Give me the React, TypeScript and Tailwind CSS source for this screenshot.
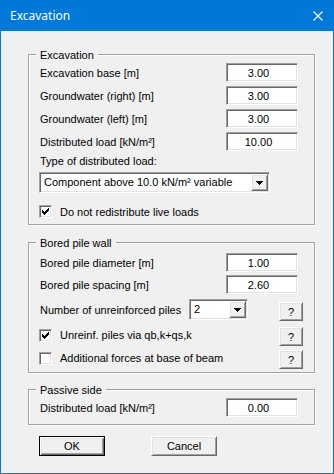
import type { ReactNode } from 'react';

const SUNKEN =
  'border border-t-[#a0a0a0] border-l-[#a0a0a0] border-r-white border-b-white shadow-[inset_1px_1px_0_#696969,inset_-1px_-1px_0_#e3e3e3]';
const RAISED =
  'border border-t-white border-l-white border-r-[#696969] border-b-[#696969] shadow-[inset_1px_1px_0_#e3e3e3,inset_-1px_-1px_0_#a0a0a0]';

function Group({ title, className = '', children }: { title: string; className?: string; children: ReactNode }) {
  return (
    <div
      className={`relative w-[287px] ml-[27px] border border-[#a0a0a0] shadow-[inset_1px_1px_0_#fff,1px_1px_0_#fff] pl-[11px] pr-[11px] ${className}`}
    >
      <span className="absolute left-[7px] top-[-7px] bg-[#f0f0f0] px-[4px] leading-[14px]">{title}</span>
      {children}
    </div>
  );
}

function NumField({ label, value, className = '' }: { label: string; value: string; className?: string }) {
  return (
    <div className={`flex items-center h-[19px] ${className}`}>
      <span className="flex-1 leading-[14px]">{label}</span>
      <div className={`${SUNKEN} bg-white w-[72px] h-[19px] mr-[5px] flex items-center justify-center pr-[7px] leading-[14px]`}>
        {value}
      </div>
    </div>
  );
}

function Arrow() {
  return (
    <svg width="7" height="4" viewBox="0 0 7 4" shapeRendering="crispEdges">
      <path d="M0 0h7v1h-1v1h-1v1h-1v1h-1v-1h-1v-1h-1v-1h-1z" fill="#000" />
    </svg>
  );
}

function Combo({ value, className = '' }: { value: string; className?: string }) {
  return (
    <div className={`${SUNKEN} bg-white h-[21px] flex items-stretch p-[1px] ${className}`}>
      <span className="flex-1 pl-[3px] leading-[17px] whitespace-nowrap overflow-hidden">{value}</span>
      <div className={`${RAISED} bg-[#f0f0f0] w-[17px] flex items-center justify-center`}>
        <Arrow />
      </div>
    </div>
  );
}

function CheckBox({ checked, label }: { checked: boolean; label: string }) {
  return (
    <div className="flex items-center ml-[-1px]">
      <div className={`${SUNKEN} bg-white w-[13px] h-[13px] flex items-center justify-center`}>
        {checked && (
          <svg width="7" height="7" viewBox="0 0 7 7" shapeRendering="crispEdges">
            <path
              d="M0 2h1v3h-1zM1 3h1v3h-1zM2 4h1v3h-1zM3 3h1v3h-1zM4 2h1v3h-1zM5 1h1v3h-1zM6 0h1v3h-1z"
              fill="#000"
            />
          </svg>
        )}
      </div>
      <span className="ml-[8px] leading-[14px] whitespace-nowrap">{label}</span>
    </div>
  );
}

function HelpButton({ className = '' }: { className?: string }) {
  return (
    <div className={`${RAISED} bg-[#f0f0f0] w-[24px] h-[19px] flex items-center justify-center leading-[14px] ${className}`}>
      ?
    </div>
  );
}

export default function App() {
  return (
    <div className="w-[334px] h-[474px] flex flex-col bg-[#f0f0f0] text-[11px] text-black font-['Liberation_Sans',Arial,sans-serif]">
      {/* Title bar */}
      <div className="h-[31px] shrink-0 bg-[#0078d7] flex items-center justify-between pl-[10px] pr-[11px] text-white">
        <span className="text-[12px] font-['Noto_Sans',sans-serif] leading-[16px]">Excavation</span>
        <svg width="10" height="10" viewBox="0 0 10 10">
          <path d="M0.5 0.5L9.5 9.5M9.5 0.5L0.5 9.5" stroke="#fff" strokeWidth="1.1" />
        </svg>
      </div>

      <div className="flex-1 border-x border-b border-[#0078d7] pt-[23px]">
        {/* Excavation */}
        <Group title="Excavation" className="pt-[8px] pb-[6px]">
          <NumField label="Excavation base [m]" value="3.00" />
          <NumField label="Groundwater (right) [m]" value="3.00" className="mt-[4px]" />
          <NumField label="Groundwater (left) [m]" value="3.00" className="mt-[4px]" />
          <NumField label="Distributed load [kN/m²]" value="10.00" className="mt-[4px]" />
          <div className="mt-[3px] h-[14px] leading-[14px]">Type of distributed load:</div>
          <Combo value="Component above 10.0 kN/m² variable" className="mt-[4px] w-[231px] ml-[-1px]" />
          <div className="mt-[12px] h-[13px] flex items-center">
            <CheckBox checked label="Do not redistribute live loads" />
          </div>
        </Group>

        {/* Bored pile wall */}
        <Group title="Bored pile wall" className="mt-[17px] pt-[10px] pb-[3px]">
          <NumField label="Bored pile diameter [m]" value="1.00" />
          <NumField label="Bored pile spacing [m]" value="2.60" className="mt-[3px]" />
          <div className="mt-[5px] flex items-start h-[22px]">
            <span className="w-[149px] h-[21px] flex items-center leading-[14px] whitespace-nowrap">Number of unreinforced piles</span>
            <Combo value="2" className="w-[59px]" />
            <HelpButton className="ml-auto mt-[3px]" />
          </div>
          <div className="mt-[6px] flex items-start h-[19px]">
            <div className="h-[16px] flex items-center">
              <CheckBox checked label="Unreinf. piles via qb,k+qs,k" />
            </div>
            <HelpButton className="ml-auto" />
          </div>
          <div className="mt-[4px] flex items-start h-[19px]">
            <div className="h-[16px] flex items-center">
              <CheckBox checked={false} label="Additional forces at base of beam" />
            </div>
            <HelpButton className="ml-auto" />
          </div>
        </Group>

        {/* Passive side */}
        <Group title="Passive side" className="mt-[16px] pt-[8px] pb-[7px]">
          <NumField label="Distributed load [kN/m²]" value="0.00" />
        </Group>

        {/* Buttons */}
        <div className="mt-[11px] ml-[38px] flex gap-[46px]">
          <div className="w-[66px] h-[20px] border border-black bg-[#f0f0f0] shadow-[inset_1px_1px_0_#fff,inset_-1px_-1px_0_#696969,inset_2px_2px_0_#e3e3e3,inset_-2px_-2px_0_#a0a0a0] flex items-center justify-center leading-[14px]">
            OK
          </div>
          <div className={`${RAISED} bg-[#f0f0f0] w-[66px] h-[20px] flex items-center justify-center leading-[14px]`}>
            Cancel
          </div>
        </div>
      </div>
    </div>
  );
}
